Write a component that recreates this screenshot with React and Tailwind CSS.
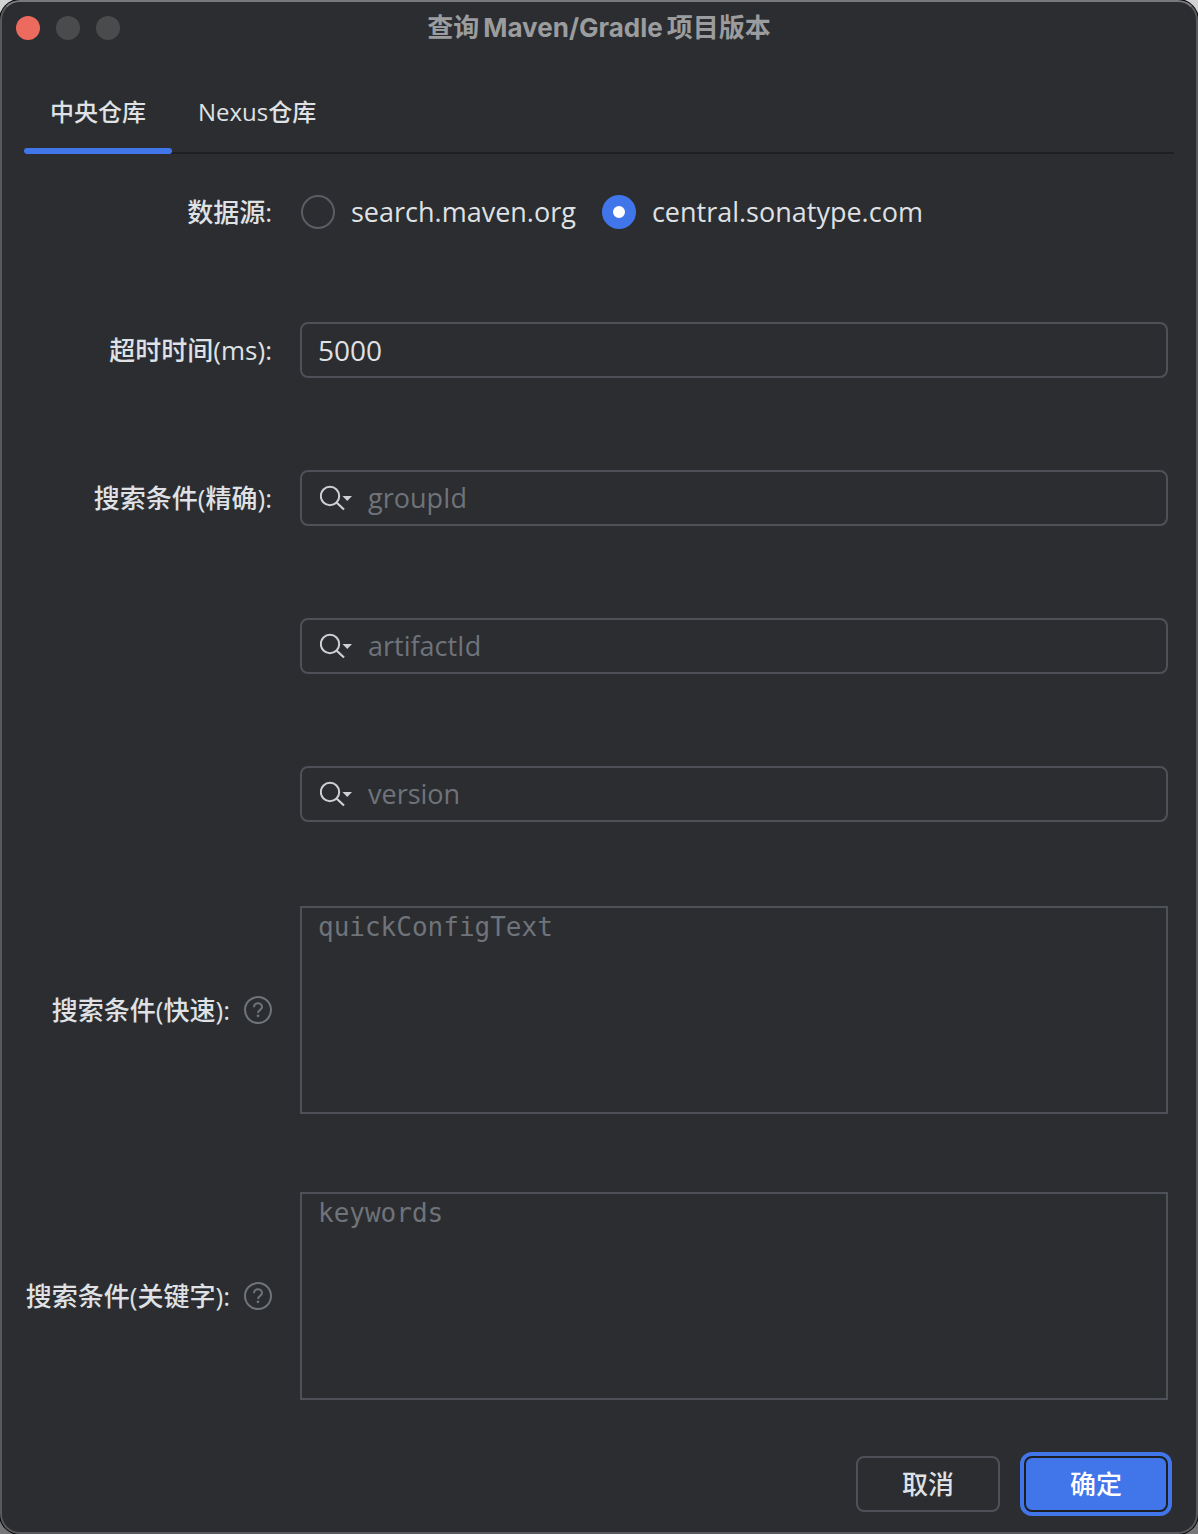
import { useState } from "react";

const SANS = "font-['Open_Sans','Noto_Sans_CJK_SC',sans-serif]";

function SearchIcon() {
  return (
    <svg width="34" height="28" viewBox="0 0 34 28" fill="none" aria-hidden="true">
      <circle cx="10" cy="12" r="9.2" stroke="#ced0d6" strokeWidth="2" />
      <path d="M16.5 18.5 24 25.5" stroke="#ced0d6" strokeWidth="2.2" />
      <path d="M22.5 12h9.5l-4.75 5z" fill="#ced0d6" />
    </svg>
  );
}

function HelpIcon() {
  return (
    <svg width="28" height="28" viewBox="0 0 28 28" fill="none" stroke="#6f737a" aria-hidden="true">
      <circle cx="14" cy="14" r="13" strokeWidth="2" />
      <path d="M10 11.2C10 8.8 11.8 7.2 14 7.2s4 1.5 4 3.7c0 2.9-4 3-4 6.1" strokeWidth="2" />
      <circle cx="14" cy="19.8" r="1.4" fill="#6f737a" stroke="none" />
    </svg>
  );
}

function Row({ label, htmlFor, help, children }) {
  return (
    <div className="grid grid-cols-[248px_minmax(0,1fr)] items-center gap-x-7">
      <div className="flex items-center justify-end gap-3.5 whitespace-nowrap">
        {label && <label htmlFor={htmlFor}>{label}</label>}
        {help && (
          <button type="button" aria-label="帮助">
            <HelpIcon />
          </button>
        )}
      </div>
      {children}
    </div>
  );
}

function Source({ value, current, onChange }) {
  return (
    <label className="flex items-center gap-4 text-[27px]">
      <input
        type="radio"
        name="source"
        value={value}
        checked={current === value}
        onChange={() => onChange(value)}
        className="size-[34px] appearance-none rounded-full border-2 border-[#5a5d63] checked:border-[11px] checked:border-[#4176ea] checked:bg-white"
      />
      {value}
    </label>
  );
}

function SearchField({ id, label }) {
  return (
    <div className="flex h-14 items-center gap-3.5 rounded-lg border-2 border-[#4e5157] px-[18px]">
      <button type="button" aria-label="搜索历史" className="shrink-0">
        <SearchIcon />
      </button>
      <input
        id={id}
        type="text"
        aria-label={label}
        placeholder={label}
        className="min-w-0 flex-1 bg-transparent text-[27px] placeholder:text-[#6f737a] focus:outline-none"
      />
    </div>
  );
}

function Area({ id, placeholder }) {
  return (
    <textarea
      id={id}
      placeholder={placeholder}
      className="block h-52 w-full resize-none border-2 border-[#4e5157] bg-transparent px-4 py-[3px] font-['DejaVu_Sans_Mono',monospace] text-[26px] leading-8 placeholder:text-[#6f737a] focus:outline-none"
    />
  );
}

export default function App() {
  const [source, setSource] = useState("central.sonatype.com");
  const [tab, setTab] = useState("中央仓库");

  return (
    <div className="min-h-screen bg-linear-to-b from-[#d4d4d4] to-[#77777a]">
      <div
        className={`flex min-h-screen flex-col rounded-[20px] border-2 border-[#57595b] border-t-[#77797b] bg-[#2b2d30] text-[26px] leading-9 font-medium text-[#dfe1e5] ring-1 ring-black ${SANS}`}
      >
        <header className="grid h-[52px] grid-cols-[1fr_auto_1fr] items-center px-3.5">
          <div className="flex gap-4">
            <button type="button" aria-label="关闭" className="size-6 rounded-full bg-[#ed6a5e]" />
            <button type="button" aria-label="最小化" className="size-6 rounded-full bg-[#4a4b4c]" />
            <button type="button" aria-label="缩放" className="size-6 rounded-full bg-[#4a4b4c]" />
          </div>
          <h1 className="font-['Inter','Noto_Sans_CJK_SC',sans-serif] font-bold text-[#9b9c9e]">
            查询<span className="mx-1">Maven/Gradle</span>项目版本
          </h1>
        </header>

        <nav role="tablist" className="mx-[22px] mt-[18px] flex h-[82px] border-b-2 border-[#1e1f22] text-2xl">
          {["中央仓库", "Nexus仓库"].map((name) => (
            <button
              key={name}
              type="button"
              role="tab"
              aria-selected={tab === name}
              onClick={() => setTab(name)}
              className="group relative px-[26px]"
            >
              {name}
              <span className="absolute inset-x-0 -bottom-0.5 hidden h-1.5 rounded-full bg-[#4176ea] group-aria-selected:block" />
            </button>
          ))}
        </nav>

        <form className="flex flex-1 flex-col pr-7 pl-[22px]" onSubmit={(e) => e.preventDefault()}>
          <div className="mt-10 flex flex-col gap-[92px]">
            <Row label="数据源:">
              <div role="radiogroup" aria-label="数据源" className="flex gap-[26px] pl-px">
                <Source value="search.maven.org" current={source} onChange={setSource} />
                <Source value="central.sonatype.com" current={source} onChange={setSource} />
              </div>
            </Row>
            <Row label="超时时间(ms):" htmlFor="timeout">
              <input
                id="timeout"
                type="text"
                defaultValue="5000"
                className="h-14 w-full rounded-lg border-2 border-[#4e5157] bg-transparent px-4 text-[28px] focus:outline-none"
              />
            </Row>
            <Row label="搜索条件(精确):" htmlFor="group">
              <SearchField id="group" label="groupId" />
            </Row>
            <Row>
              <SearchField id="artifact" label="artifactId" />
            </Row>
            <Row>
              <SearchField id="version" label="version" />
            </Row>
          </div>

          <div className="mt-[84px] flex flex-col gap-[78px]">
            <Row label="搜索条件(快速):" htmlFor="quick" help>
              <Area id="quick" placeholder="quickConfigText" />
            </Row>
            <Row label="搜索条件(关键字):" htmlFor="keywords" help>
              <Area id="keywords" placeholder="keywords" />
            </Row>
          </div>

          <div className="mt-auto flex justify-end gap-6 pt-14 pb-5">
            <button type="button" className="h-14 w-36 rounded-lg border-2 border-[#4e5157]">
              取消
            </button>
            <button
              type="submit"
              className="h-14 w-36 rounded-lg border-2 border-[#1e1f22] bg-[#4176ea] text-white ring-4 ring-[#4176ea]"
            >
              确定
            </button>
          </div>
        </form>
      </div>
    </div>
  );
}
